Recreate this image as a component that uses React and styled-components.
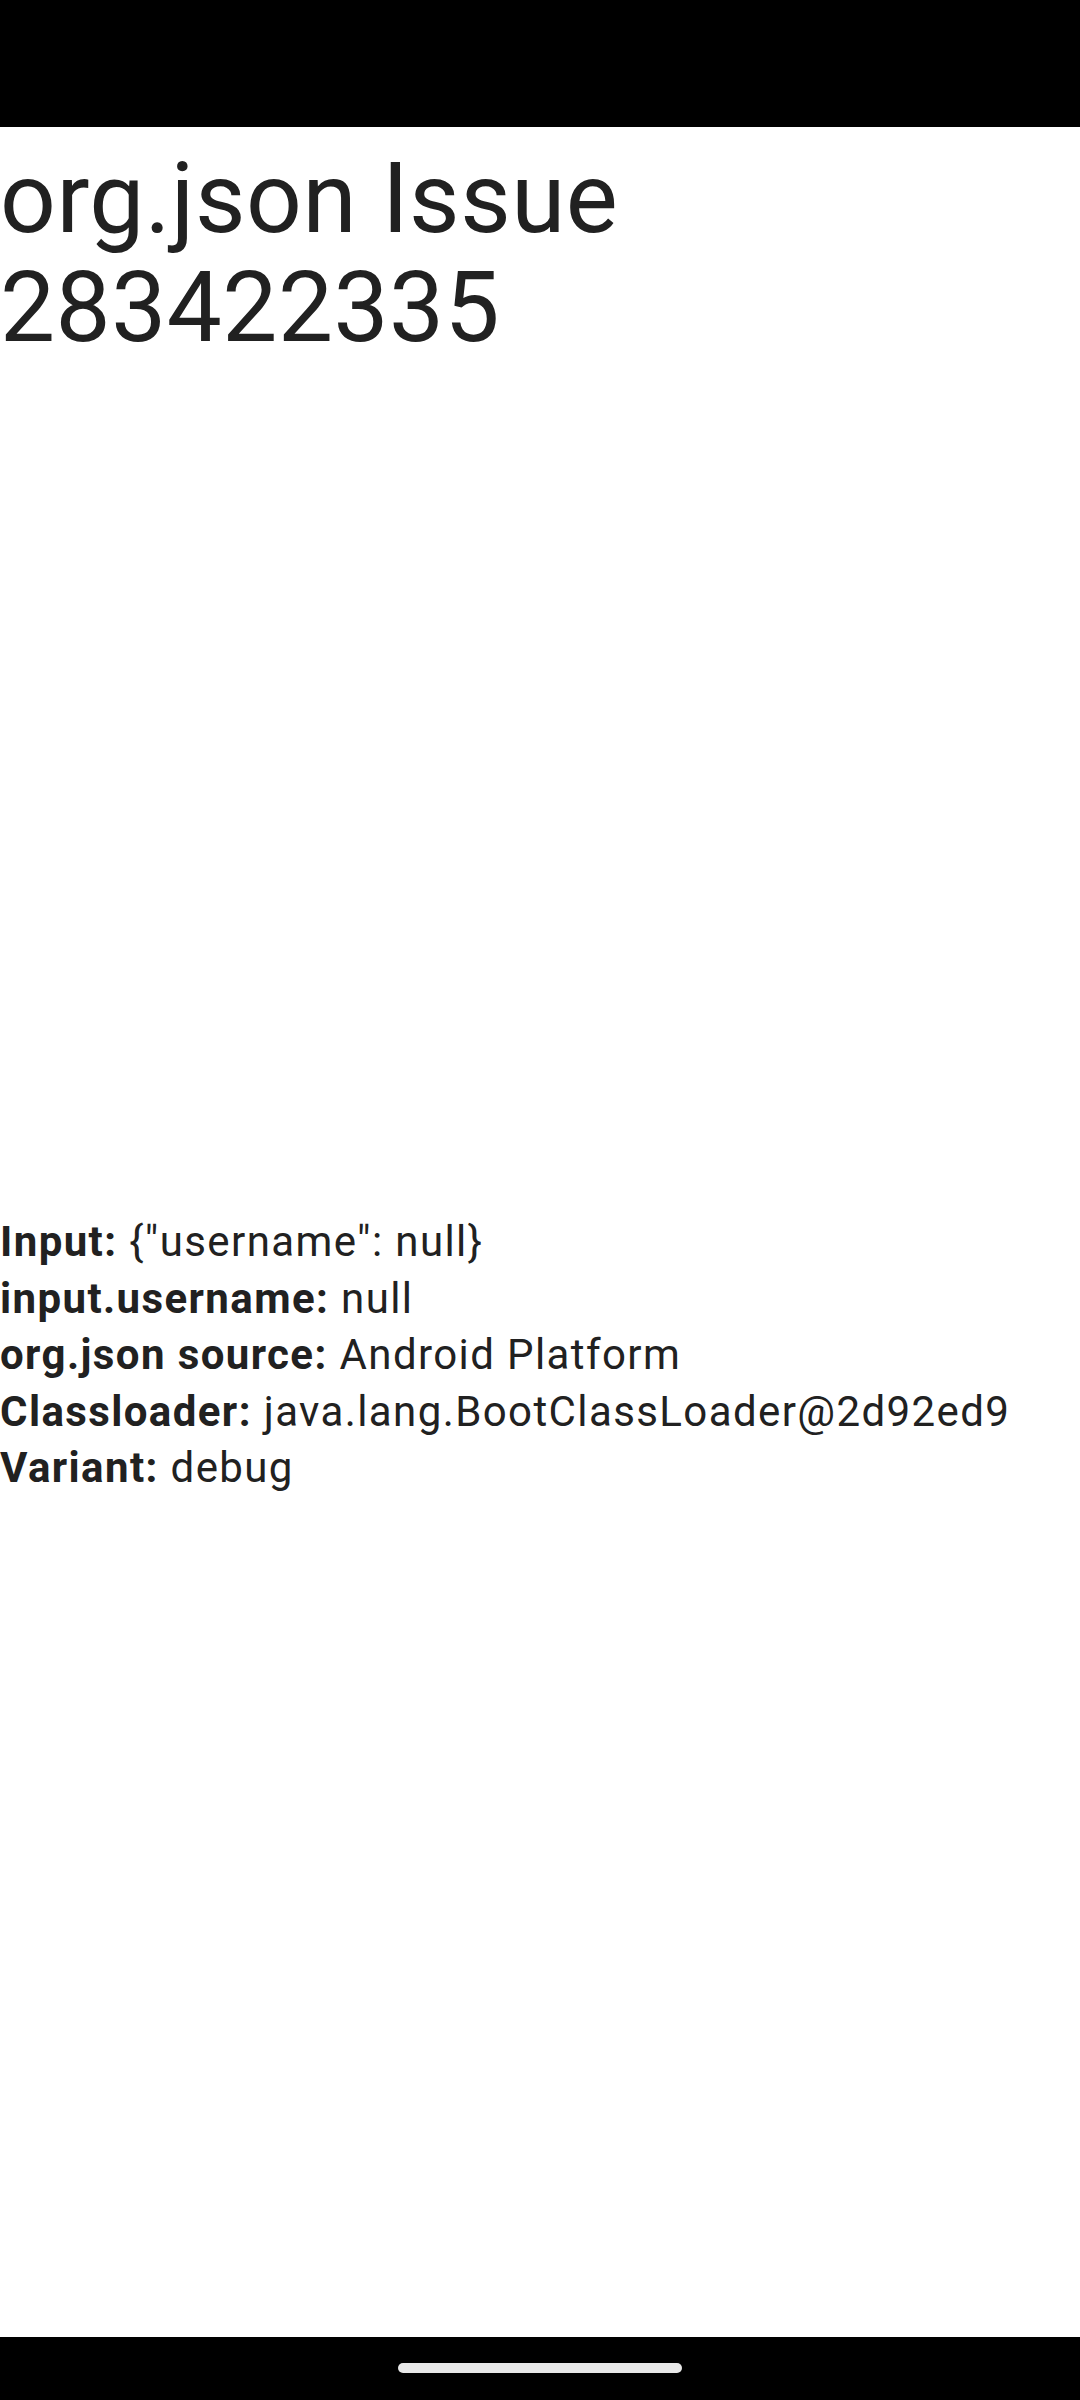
import styled, { createGlobalStyle } from "styled-components";

const GlobalStyle = createGlobalStyle`
  html, body {
    margin: 0;
    padding: 0;
    background: #000;
  }
  * {
    box-sizing: border-box;
  }
`;

const info = [
  { label: "Input:", value: '{"username": null}' },
  { label: "input.username:", value: "null" },
  { label: "org.json source:", value: "Android Platform" },
  { label: "Classloader:", value: "java.lang.BootClassLoader@2d92ed9" },
  { label: "Variant:", value: "debug" },
];

function App() {
  return (
    <>
      <GlobalStyle />
      <Screen>
        <StatusBar />
        <Content>
          <Title>org.json Issue 283422335</Title>
          <InfoList>
            {info.map((row) => (
              <InfoRow key={row.label}>
                <Label>{row.label}</Label> {row.value}
              </InfoRow>
            ))}
          </InfoList>
        </Content>
        <NavBar>
          <Handle />
        </NavBar>
      </Screen>
    </>
  );
}

const Screen = styled.div`
  width: 1080px;
  height: 2400px;
  display: flex;
  flex-direction: column;
  background: #fff;
  font-family: Roboto, "Noto Sans", sans-serif;
  color: #212121;
`;

const StatusBar = styled.div`
  height: 127px;
  flex-shrink: 0;
  background: #000;
`;

const Content = styled.main`
  flex: 1;
  display: flex;
  flex-direction: column;
  background: #fff;
`;

const Title = styled.h1`
  margin: 0;
  padding-top: 17px;
  width: 660px;
  font-size: 98px;
  font-weight: 400;
  line-height: 109px;
  letter-spacing: 0.5px;
`;

const InfoList = styled.div`
  margin-top: 852px;
  display: flex;
  flex-direction: column;
`;

const InfoRow = styled.div`
  font-size: 42px;
  line-height: 56.5px;
  letter-spacing: 1.4px;
  white-space: nowrap;
`;

const Label = styled.span`
  font-weight: 700;
`;

const NavBar = styled.div`
  height: 63px;
  flex-shrink: 0;
  background: #000;
  display: flex;
  justify-content: center;
  padding-top: 26px;
`;

const Handle = styled.div`
  width: 284px;
  height: 10px;
  border-radius: 5px;
  background: #e8e8e8;
`;

export default App;
